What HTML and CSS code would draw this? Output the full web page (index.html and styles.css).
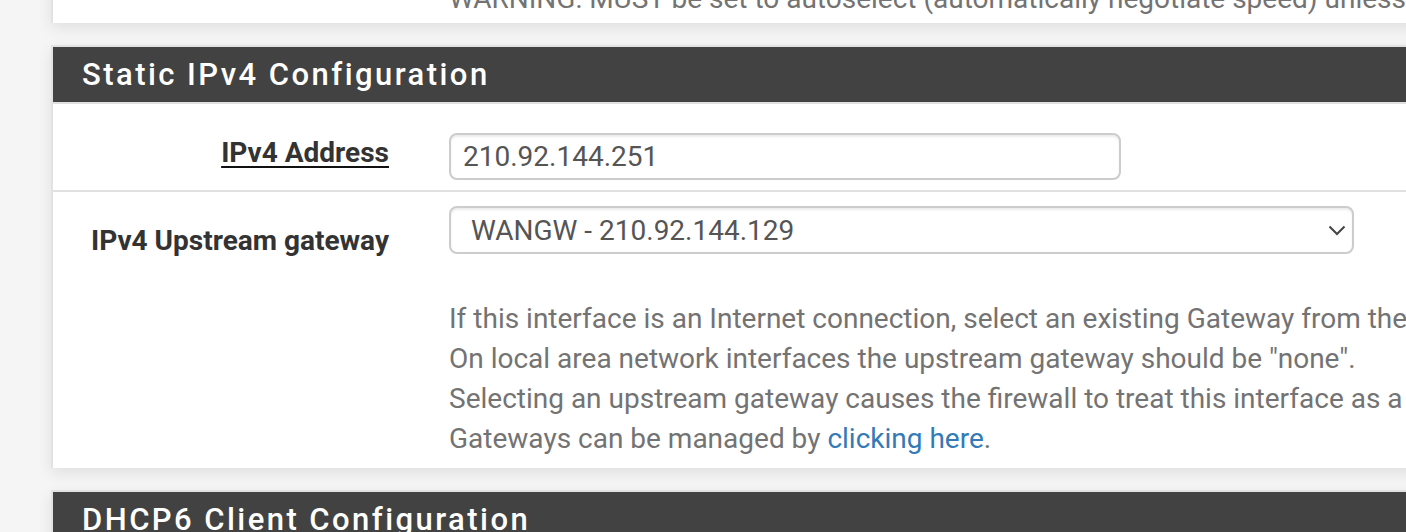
FILE: index.html
```html
<!DOCTYPE html>
<html lang="en">
<head>
<meta charset="utf-8">
<title>Static IPv4 Configuration</title>
<link rel="stylesheet" href="styles.css">
</head>
<body>
<div class="page">
  <section class="panel panel-top">
    <div class="row row-warning">
      <div class="label-col"></div>
      <div class="ctrl-col">
        <p class="help nowrap">WARNING: MUST be set to autoselect (automatically negotiate speed) unless the port this interface connects to has its speed and duplex forced.</p>
      </div>
    </div>
  </section>

  <section class="panel">
    <div class="panel-heading"><h2 class="panel-title">Static IPv4 Configuration</h2></div>
    <div class="panel-body">
      <div class="row row-addr">
        <label class="label-col"><span class="required">IPv4 Address</span></label>
        <div class="ctrl-col">
          <input class="form-control input-addr" type="text" value="210.92.144.251">
        </div>
      </div>
      <div class="row row-gw">
        <label class="label-col label-pad">IPv4 Upstream gateway</label>
        <div class="ctrl-col">
          <div class="select-wrap">
            <select class="form-control select-gw">
              <option>WANGW - 210.92.144.129</option>
            </select>
            <svg class="chevron" width="18" height="11" viewBox="0 0 18 11" aria-hidden="true"><path d="M1.5 1.5 L9 9 L16.5 1.5" fill="none" stroke="#444" stroke-width="2"/></svg>
          </div>
          <p class="help help-gw nowrap">If this interface is an Internet connection, select an existing Gateway from the list or add a new one using the "Add" button.<br>On local area network interfaces the upstream gateway should be "none".<br>Selecting an upstream gateway causes the firewall to treat this interface as a WAN type interface.<br>Gateways can be managed by <a href="#">clicking here</a>.</p>
        </div>
      </div>
    </div>
  </section>

  <section class="panel">
    <div class="panel-heading"><h2 class="panel-title">DHCP6 Client Configuration</h2></div>
    <div class="panel-body"></div>
  </section>
</div>
</body>
</html>
```

FILE: styles.css
```css
html, body {
  margin: 0;
  padding: 0;
}
body {
  background: #f5f5f5;
  font-family: Roboto, "Liberation Sans", Arial, sans-serif;
  font-size: 28px;
  line-height: 40px;
  color: #333;
  overflow: hidden;
  width: 1406px;
  height: 532px;
}
.page {
  margin-left: 51px;
  width: 1700px;
}
.panel {
  background: #fff;
  border: 2px solid #e2e2e2;
  border-bottom: 0;
  box-shadow: 0 5px 14px rgba(0, 0, 0, 0.09);
  margin-bottom: 22px;
}
.panel-top {
  margin-top: -23px;
}
.panel-heading {
  background: #424242;
  height: 55px;
  display: flex;
  align-items: center;
  padding-left: 29px;
  border-bottom: 2px solid #e0e0e0;
}
.panel-title {
  margin: 0;
  color: #fff;
  font-size: 31px;
  font-weight: 500;
  letter-spacing: 2.45px;
  line-height: 40px;
}
.row {
  display: flex;
  align-items: flex-start;
}
.row-warning {
  padding-bottom: 4px;
}
.row-addr {
  padding: 29px 0 10px;
  border-bottom: 2px solid #e0e0e0;
}
.row-gw {
  padding: 14px 0 9px;
}
.label-col {
  flex: 0 0 351px;
  box-sizing: border-box;
  padding-right: 15px;
  text-align: right;
  font-weight: 700;
  color: #333;
}
.label-pad {
  padding-top: 15px;
}
.required {
  text-decoration: underline;
  text-decoration-thickness: 2px;
  text-underline-offset: 4px;
  text-decoration-color: #111;
}
.ctrl-col {
  padding-left: 45px;
}
.form-control {
  box-sizing: border-box;
  height: 47px;
  border: 2px solid #ccc;
  border-radius: 8px;
  box-shadow: inset 0 2px 2px rgba(0, 0, 0, 0.075);
  background: #fff;
  font-family: Roboto, "Liberation Sans", Arial, sans-serif;
  font-size: 28px;
  color: #555;
  margin: 0;
  outline: none;
}
.input-addr {
  width: 672px;
  padding: 0 12px;
  display: block;
}
.select-wrap {
  position: relative;
  width: 905px;
}
.select-gw {
  width: 905px;
  height: 48px;
  display: block;
  padding: 0 40px 0 20px;
  -webkit-appearance: none;
  appearance: none;
}
.chevron {
  position: absolute;
  right: 8px;
  top: 19px;
  pointer-events: none;
}
.help {
  margin: 0;
  color: #737373;
}
.nowrap {
  white-space: nowrap;
}
.help-gw {
  margin-top: 45px;
}
.help a {
  color: #337ab7;
  text-decoration: none;
}
```
